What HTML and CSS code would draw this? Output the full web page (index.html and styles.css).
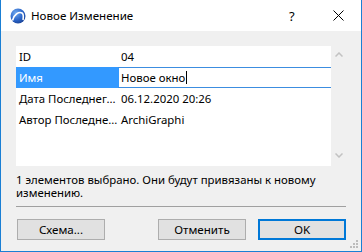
FILE: index.html
```html
<!DOCTYPE html>
<html lang="ru">
<head>
  <meta charset="UTF-8" />
  <title>Новое Изменение</title>
  <link rel="stylesheet" href="styles.css">
</head>
<body>
  <div class="window">
    <div class="titlebar">
      <svg class="app-icon" width="16" height="16" viewBox="0 0 16 16">
        <defs>
          <radialGradient id="ball" cx="0.35" cy="0.3" r="0.8">
            <stop offset="0" stop-color="#6fa8ee" />
            <stop offset="0.6" stop-color="#2a64c8" />
            <stop offset="1" stop-color="#1a3f8f" />
          </radialGradient>
        </defs>
        <circle cx="8" cy="8" r="7.5" fill="url(#ball)" />
        <path d="M2.5 12.5 C4 6 9 3.5 12 5 C13.5 6 13.5 9 13 12" fill="none" stroke="#fff" stroke-width="1.6" />
      </svg>
      <div class="title">Новое Изменение</div>
      <div class="help">?</div>
      <svg class="close" width="11" height="11" viewBox="0 0 11 11">
        <path d="M0.5 0.5 L10.5 10.5 M10.5 0.5 L0.5 10.5" stroke="#000" stroke-width="1" />
      </svg>
    </div>

    <div class="content">
      <div class="list">
        <div class="rows">
          <div class="row">
            <div class="label">ID</div>
            <div class="value">04</div>
          </div>
          <div class="row selected">
            <div class="label">Имя</div>
            <div class="value edit">Новое окно<span class="caret"></span></div>
          </div>
          <div class="row">
            <div class="label">Дата Последнег...</div>
            <div class="value">06.12.2020 20:26</div>
          </div>
          <div class="row">
            <div class="label">Автор Последне...</div>
            <div class="value">ArchiGraphi</div>
          </div>
        </div>
        <div class="scrollbar">
          <svg width="8" height="5" viewBox="0 0 8 5"><path d="M0.5 4.5 L4 1 L7.5 4.5" fill="none" stroke="#c2c2c2" stroke-width="1.5" /></svg>
          <svg width="8" height="5" viewBox="0 0 8 5"><path d="M0.5 0.5 L4 4 L7.5 0.5" fill="none" stroke="#c2c2c2" stroke-width="1.5" /></svg>
        </div>
      </div>

      <div class="info">1 элементов выбрано. Они будут привязаны к новому изменению.</div>

      <div class="separator"></div>

      <div class="buttons">
        <button class="btn">Схема...</button>
        <div class="spacer"></div>
        <button class="btn">Отменить</button>
        <button class="btn default">OK</button>
      </div>
    </div>

    <svg class="grip" width="9" height="9" viewBox="0 0 9 9">
      <rect x="6" y="0" width="2" height="2" fill="#bcbcbc" />
      <rect x="3" y="3" width="2" height="2" fill="#bcbcbc" />
      <rect x="6" y="3" width="2" height="2" fill="#bcbcbc" />
      <rect x="0" y="6" width="2" height="2" fill="#bcbcbc" />
      <rect x="3" y="6" width="2" height="2" fill="#bcbcbc" />
      <rect x="6" y="6" width="2" height="2" fill="#bcbcbc" />
    </svg>
  </div>
</body>
</html>
```

FILE: styles.css
```css
body {
  margin: 0;
  font-family: "Noto Sans", "Open Sans", sans-serif;
  font-size: 11.4px;
  color: #000;
  background: #fff;
}

.window {
  position: relative;
  width: 362px;
  height: 252px;
  box-sizing: border-box;
  border: 1px solid #1a7fd4;
  border-top: none;
  background: #f0f0f0;
  display: flex;
  flex-direction: column;
}

.titlebar {
  height: 31px;
  background: #fff;
  display: flex;
  align-items: center;
  padding-left: 9px;
}

.app-icon {
  margin-top: 1px;
}

.title {
  margin-left: 5px;
  flex: 1;
  font-size: 11.6px;
}

.help {
  width: 12px;
  margin-right: 32px;
  font-size: 13px;
}

.close {
  margin-right: 17px;
}

.content {
  flex: 1;
  padding: 15px 15px 0 15px;
  display: flex;
  flex-direction: column;
}

.list {
  height: 120px;
  display: flex;
}

.rows {
  flex: 1;
  background: #fff;
}

.row {
  height: 21px;
  display: flex;
  align-items: center;
}

.label {
  width: 100px;
  padding-left: 3px;
  height: 100%;
  display: flex;
  align-items: center;
  white-space: nowrap;
  overflow: hidden;
}

.value {
  flex: 1;
  padding-left: 2px;
  height: 100%;
  display: flex;
  align-items: center;
  white-space: nowrap;
}

.selected .label {
  background: #3399ff;
  color: #fff;
}

.edit {
  box-sizing: border-box;
  border-top: 1px solid #3c8de0;
  border-bottom: 1px solid #3c8de0;
  margin-left: -1px;
  padding-left: 3px;
}

.caret {
  display: inline-block;
  width: 1px;
  height: 13px;
  background: #000;
  margin-left: 1px;
}

.scrollbar {
  width: 15px;
  display: flex;
  flex-direction: column;
  justify-content: space-between;
  align-items: center;
  padding: 6px 0 8px 0;
}

.info {
  margin-top: 7px;
  line-height: 13px;
  padding-right: 20px;
}

.separator {
  margin-top: 7px;
  height: 1px;
  background: #a0a0a0;
}

.buttons {
  margin-top: 12px;
  display: flex;
  gap: 12px;
}

.spacer {
  flex: 1;
}

.btn {
  width: 88px;
  height: 21px;
  box-sizing: border-box;
  border: 1px solid #adadad;
  background: #e1e1e1;
  font-family: inherit;
  font-size: 11.6px;
  padding: 0;
  color: #000;
}

.btn:first-child {
  margin-left: 1px;
}

.default {
  border: 2px solid #0078d7;
}

.grip {
  position: absolute;
  right: 2px;
  bottom: 2px;
}
```
